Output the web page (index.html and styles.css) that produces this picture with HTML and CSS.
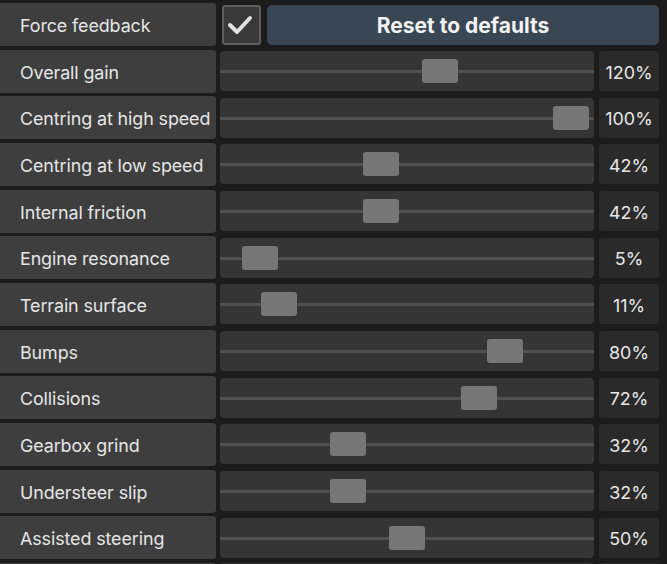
FILE: index.html
```html
<!DOCTYPE html>
<html>
<head>
<meta charset="utf-8">
<link rel="stylesheet" href="styles.css">
</head>
<body>
<div class="panel">
  <div class="row">
    <div class="label">Force feedback</div>
    <div class="checkbox">
      <svg width="39" height="40" viewBox="0 0 39 40"><polyline points="8,20 15,27 28,13" fill="none" stroke="#e2e2e2" stroke-width="4" stroke-linecap="round" stroke-linejoin="round"/></svg>
    </div>
    <div class="button">Reset to defaults</div>
  </div>
  <div class="row"><div class="label">Overall gain</div><div class="track"><div class="line"></div><div class="rail"><div class="thumb" style="--v:0.6"></div></div></div><div class="value">120%</div></div>
  <div class="row"><div class="label">Centring at high speed</div><div class="track"><div class="line"></div><div class="rail"><div class="thumb" style="--v:1"></div></div></div><div class="value">100%</div></div>
  <div class="row"><div class="label">Centring at low speed</div><div class="track"><div class="line"></div><div class="rail"><div class="thumb" style="--v:0.42"></div></div></div><div class="value">42%</div></div>
  <div class="row"><div class="label">Internal friction</div><div class="track"><div class="line"></div><div class="rail"><div class="thumb" style="--v:0.42"></div></div></div><div class="value">42%</div></div>
  <div class="row"><div class="label">Engine resonance</div><div class="track"><div class="line"></div><div class="rail"><div class="thumb" style="--v:0.05"></div></div></div><div class="value">5%</div></div>
  <div class="row"><div class="label">Terrain surface</div><div class="track"><div class="line"></div><div class="rail"><div class="thumb" style="--v:0.11"></div></div></div><div class="value">11%</div></div>
  <div class="row"><div class="label">Bumps</div><div class="track"><div class="line"></div><div class="rail"><div class="thumb" style="--v:0.8"></div></div></div><div class="value">80%</div></div>
  <div class="row"><div class="label">Collisions</div><div class="track"><div class="line"></div><div class="rail"><div class="thumb" style="--v:0.72"></div></div></div><div class="value">72%</div></div>
  <div class="row"><div class="label">Gearbox grind</div><div class="track"><div class="line"></div><div class="rail"><div class="thumb" style="--v:0.32"></div></div></div><div class="value">32%</div></div>
  <div class="row"><div class="label">Understeer slip</div><div class="track"><div class="line"></div><div class="rail"><div class="thumb" style="--v:0.32"></div></div></div><div class="value">32%</div></div>
  <div class="row"><div class="label">Assisted steering</div><div class="track"><div class="line"></div><div class="rail"><div class="thumb" style="--v:0.5"></div></div></div><div class="value">50%</div></div>
  <div class="row row-edge"><div class="label"></div><div class="track"></div><div class="value"></div></div>
</div>
</body>
</html>
```
FILE: styles.css
```css
html, body {
  margin: 0;
  padding: 0;
  background: #1c1c1c;
  overflow: hidden;
}
body {
  width: 667px;
  height: 564px;
  font-family: Inter, "Noto Sans", sans-serif;
  color: #e6e6e6;
}
.panel {
  display: flex;
  flex-direction: column;
  gap: 3.67px;
  padding: 3px 8px 0 0;
  height: 564px;
  box-sizing: border-box;
  overflow: hidden;
}
.row {
  display: flex;
  height: 43px;
  flex: none;
  align-items: center;
}
.row-edge {
  align-items: flex-start;
}
.label {
  width: 216px;
  height: 43px;
  flex: none;
  background: #3e3e3e;
  border-radius: 0 3px 3px 0;
  display: flex;
  align-items: center;
  padding: 2px 0 0 20px;
  box-sizing: border-box;
  font-size: 17.9px;
  letter-spacing: -0.1px;
}
.checkbox {
  width: 39px;
  height: 40px;
  margin-left: 6px;
  box-sizing: border-box;
  border: 2px solid #5e5e5e;
  border-radius: 3px;
  background: #393939;
  flex: none;
  display: flex;
  align-items: center;
  justify-content: center;
}
.checkbox svg {
  display: block;
  flex: none;
}
.button {
  flex: 1;
  height: 40px;
  margin-left: 6px;
  padding-top: 2px;
  box-sizing: border-box;
  background: #394653;
  border-radius: 5px;
  display: flex;
  align-items: center;
  justify-content: center;
  font-weight: 700;
  font-size: 21px;
  color: #f2f2f2;
}
.track {
  position: relative;
  width: 374px;
  height: 40px;
  margin-left: 4px;
  background: #353535;
  border-radius: 4px;
  flex: none;
  box-sizing: border-box;
  padding: 0 5.5px;
  display: flex;
  align-items: center;
}
.line {
  position: absolute;
  left: 0;
  right: 0;
  top: 19px;
  height: 3px;
  background: #505050;
}
.rail {
  position: relative;
  flex: 1;
  height: 24px;
}
.thumb {
  position: absolute;
  top: 0;
  width: 36px;
  height: 24px;
  left: calc(var(--v) * (100% - 36px));
  background: #767676;
  border-radius: 3px;
}
.value {
  flex: 1;
  height: 40px;
  margin-left: 5px;
  padding-top: 2px;
  box-sizing: border-box;
  background: #2a2a2a;
  border-radius: 3px;
  display: flex;
  align-items: center;
  justify-content: center;
  font-size: 17.9px;
}
```
